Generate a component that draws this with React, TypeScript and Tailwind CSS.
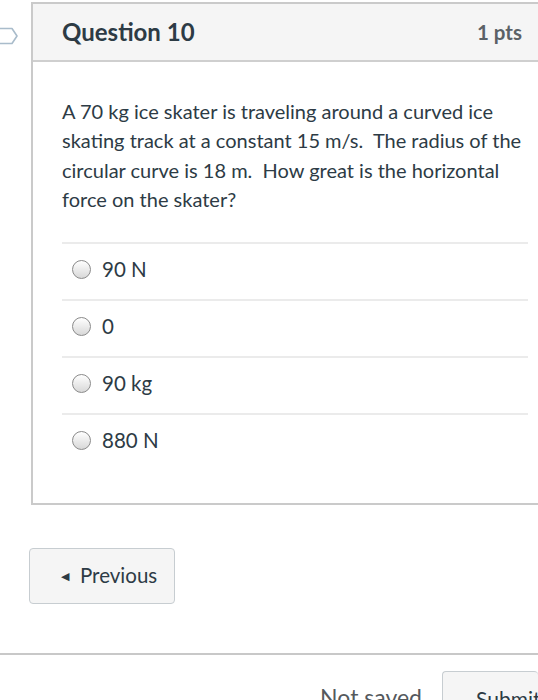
import React from 'react';

const options = ['90 N', '0', '90 kg', '880 N'];

export default function App() {
  return (
    <div className="relative h-[700px] w-[538px] overflow-hidden bg-white font-['Lato','Liberation_Sans',sans-serif] text-[#2d3b45]">
      {/* QUESTION CARD */}
      <div className="mt-[2px] flex">
        <div className="w-[31px] shrink-0 pt-[25px]">
          <svg width="20" height="18" viewBox="0 0 20 18" aria-hidden>
            <path
              d="M-4 1.5 H12 L17 9 L12 16.5 H-4"
              fill="none"
              stroke="#a9bccb"
              strokeWidth="1.6"
              strokeLinejoin="round"
            />
          </svg>
        </div>
        <div className="flex-1 border-b-2 border-l-2 border-t-2 border-[#cacaca]">
          <div className="flex h-[58px] items-center justify-between border-b-2 border-[#cfcfcf] bg-[#f5f5f5] pl-[29px] pr-[16px]">
            <h2 className="text-[24px] font-bold leading-none text-[#2d3b45]">Question 10</h2>
            <span className="text-[20.5px] font-bold leading-none text-[#5b6166]">1 pts</span>
          </div>
          <div className="pb-[33px] pl-[29px] pr-[10px] pt-[35px]">
            <p className="mb-[27px] text-[20px] leading-[29.4px]">
              A 70 kg ice skater is traveling around a curved ice skating track at a constant 15 m/s.{'\u00a0'} The
              radius of the circular curve is 18 m.{'\u00a0'} How great is the horizontal force on the skater?
            </p>
            {options.map((o) => (
              <Option key={o} label={o} />
            ))}
          </div>
        </div>
      </div>

      {/* NAV */}
      <div className="pl-[29px] pt-[43px]">
        <button className="flex h-[56px] w-[146px] items-center gap-[11px] rounded-[4px] border border-[#c7cdd1] bg-[#f5f5f5] pl-[31px] text-[20.5px] text-[#2d3b45]">
          <span className="text-[11px] leading-none">◀</span>
          Previous
        </button>
      </div>

      <div className="mt-[49px] border-t-2 border-[#c8c8c8]" />

      <div className="flex items-start justify-end pt-[16px]">
        <span className="mr-[20px] mt-[9px] text-[23px] text-[#55595d]">Not saved</span>
        <button className="h-[56px] w-[96px] rounded-[4px] border border-r-0 border-[#c7cdd1] bg-[#f5f5f5] pl-[33px] text-left text-[21px] text-[#2d3b45]">
          Submit
        </button>
      </div>
    </div>
  );
}

function Option({ label }: { label: string }) {
  return (
    <div className="flex h-[57px] items-center gap-[11px] border-t-2 border-[#ebebeb] pb-[3px] pl-[10px]">
      <span className="h-[19px] w-[19px] rounded-full border border-[#8a8a8a] bg-gradient-to-b from-white to-[#d8d8d8]" />
      <span className="text-[20.5px] text-[#2d3b45]">{label}</span>
    </div>
  );
}
